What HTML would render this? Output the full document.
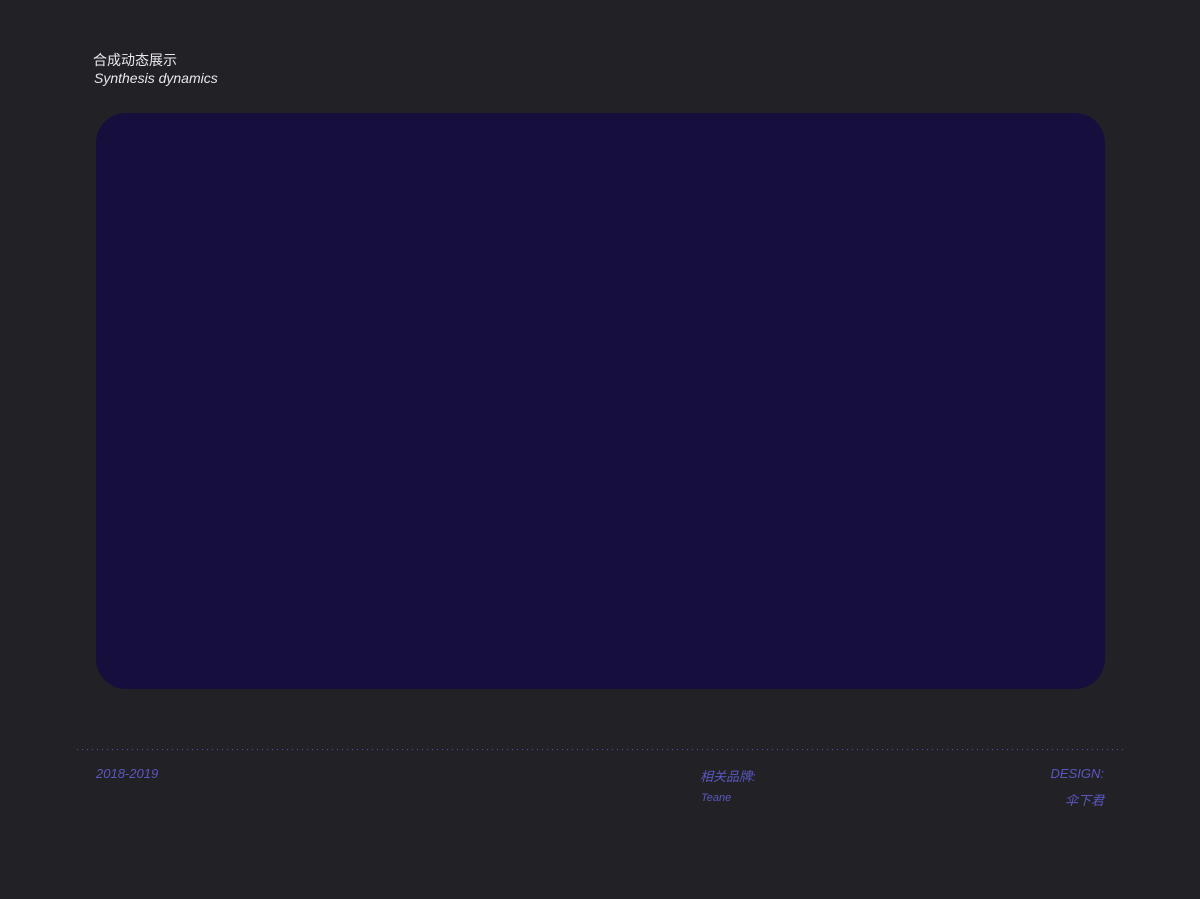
<!DOCTYPE html>
<html><head><meta charset="utf-8"><style>
html,body{margin:0;padding:0}
body{width:1200px;height:899px;background:#222226;position:relative;overflow:hidden;font-family:"Liberation Sans","Noto Sans CJK SC",sans-serif;}
.t{position:absolute;font-style:italic;}
.panel{position:absolute;left:96px;top:113px;width:1009px;height:576px;border-radius:30px;background:#160e3c;}
.line{position:absolute;left:77px;top:749px;width:1046px;height:1px;background:repeating-linear-gradient(90deg,#5552b0 0 1px,transparent 1px 5px);}
.b{color:#5b57c0;}
</style></head><body>
<div class="t" style="left:93px;top:50px;font-size:14px;color:#e8e8ec;font-style:normal">合成动态展示</div>
<div class="t" style="left:94px;top:70px;font-size:14px;color:#e8e8ec">Synthesis dynamics</div>
<div class="panel"></div>
<div class="line"></div>
<div class="t b" style="left:96px;top:766px;font-size:13px">2018-2019</div>
<div class="t b" style="left:700px;top:766px;font-size:13px">相关品牌:</div>
<div class="t b" style="left:701px;top:792px;font-size:11px">Teane</div>
<div class="t b" style="right:96px;top:766px;font-size:13px">DESIGN:</div>
<div class="t b" style="right:96px;top:790px;font-size:13px">伞下君</div>
</body></html>
